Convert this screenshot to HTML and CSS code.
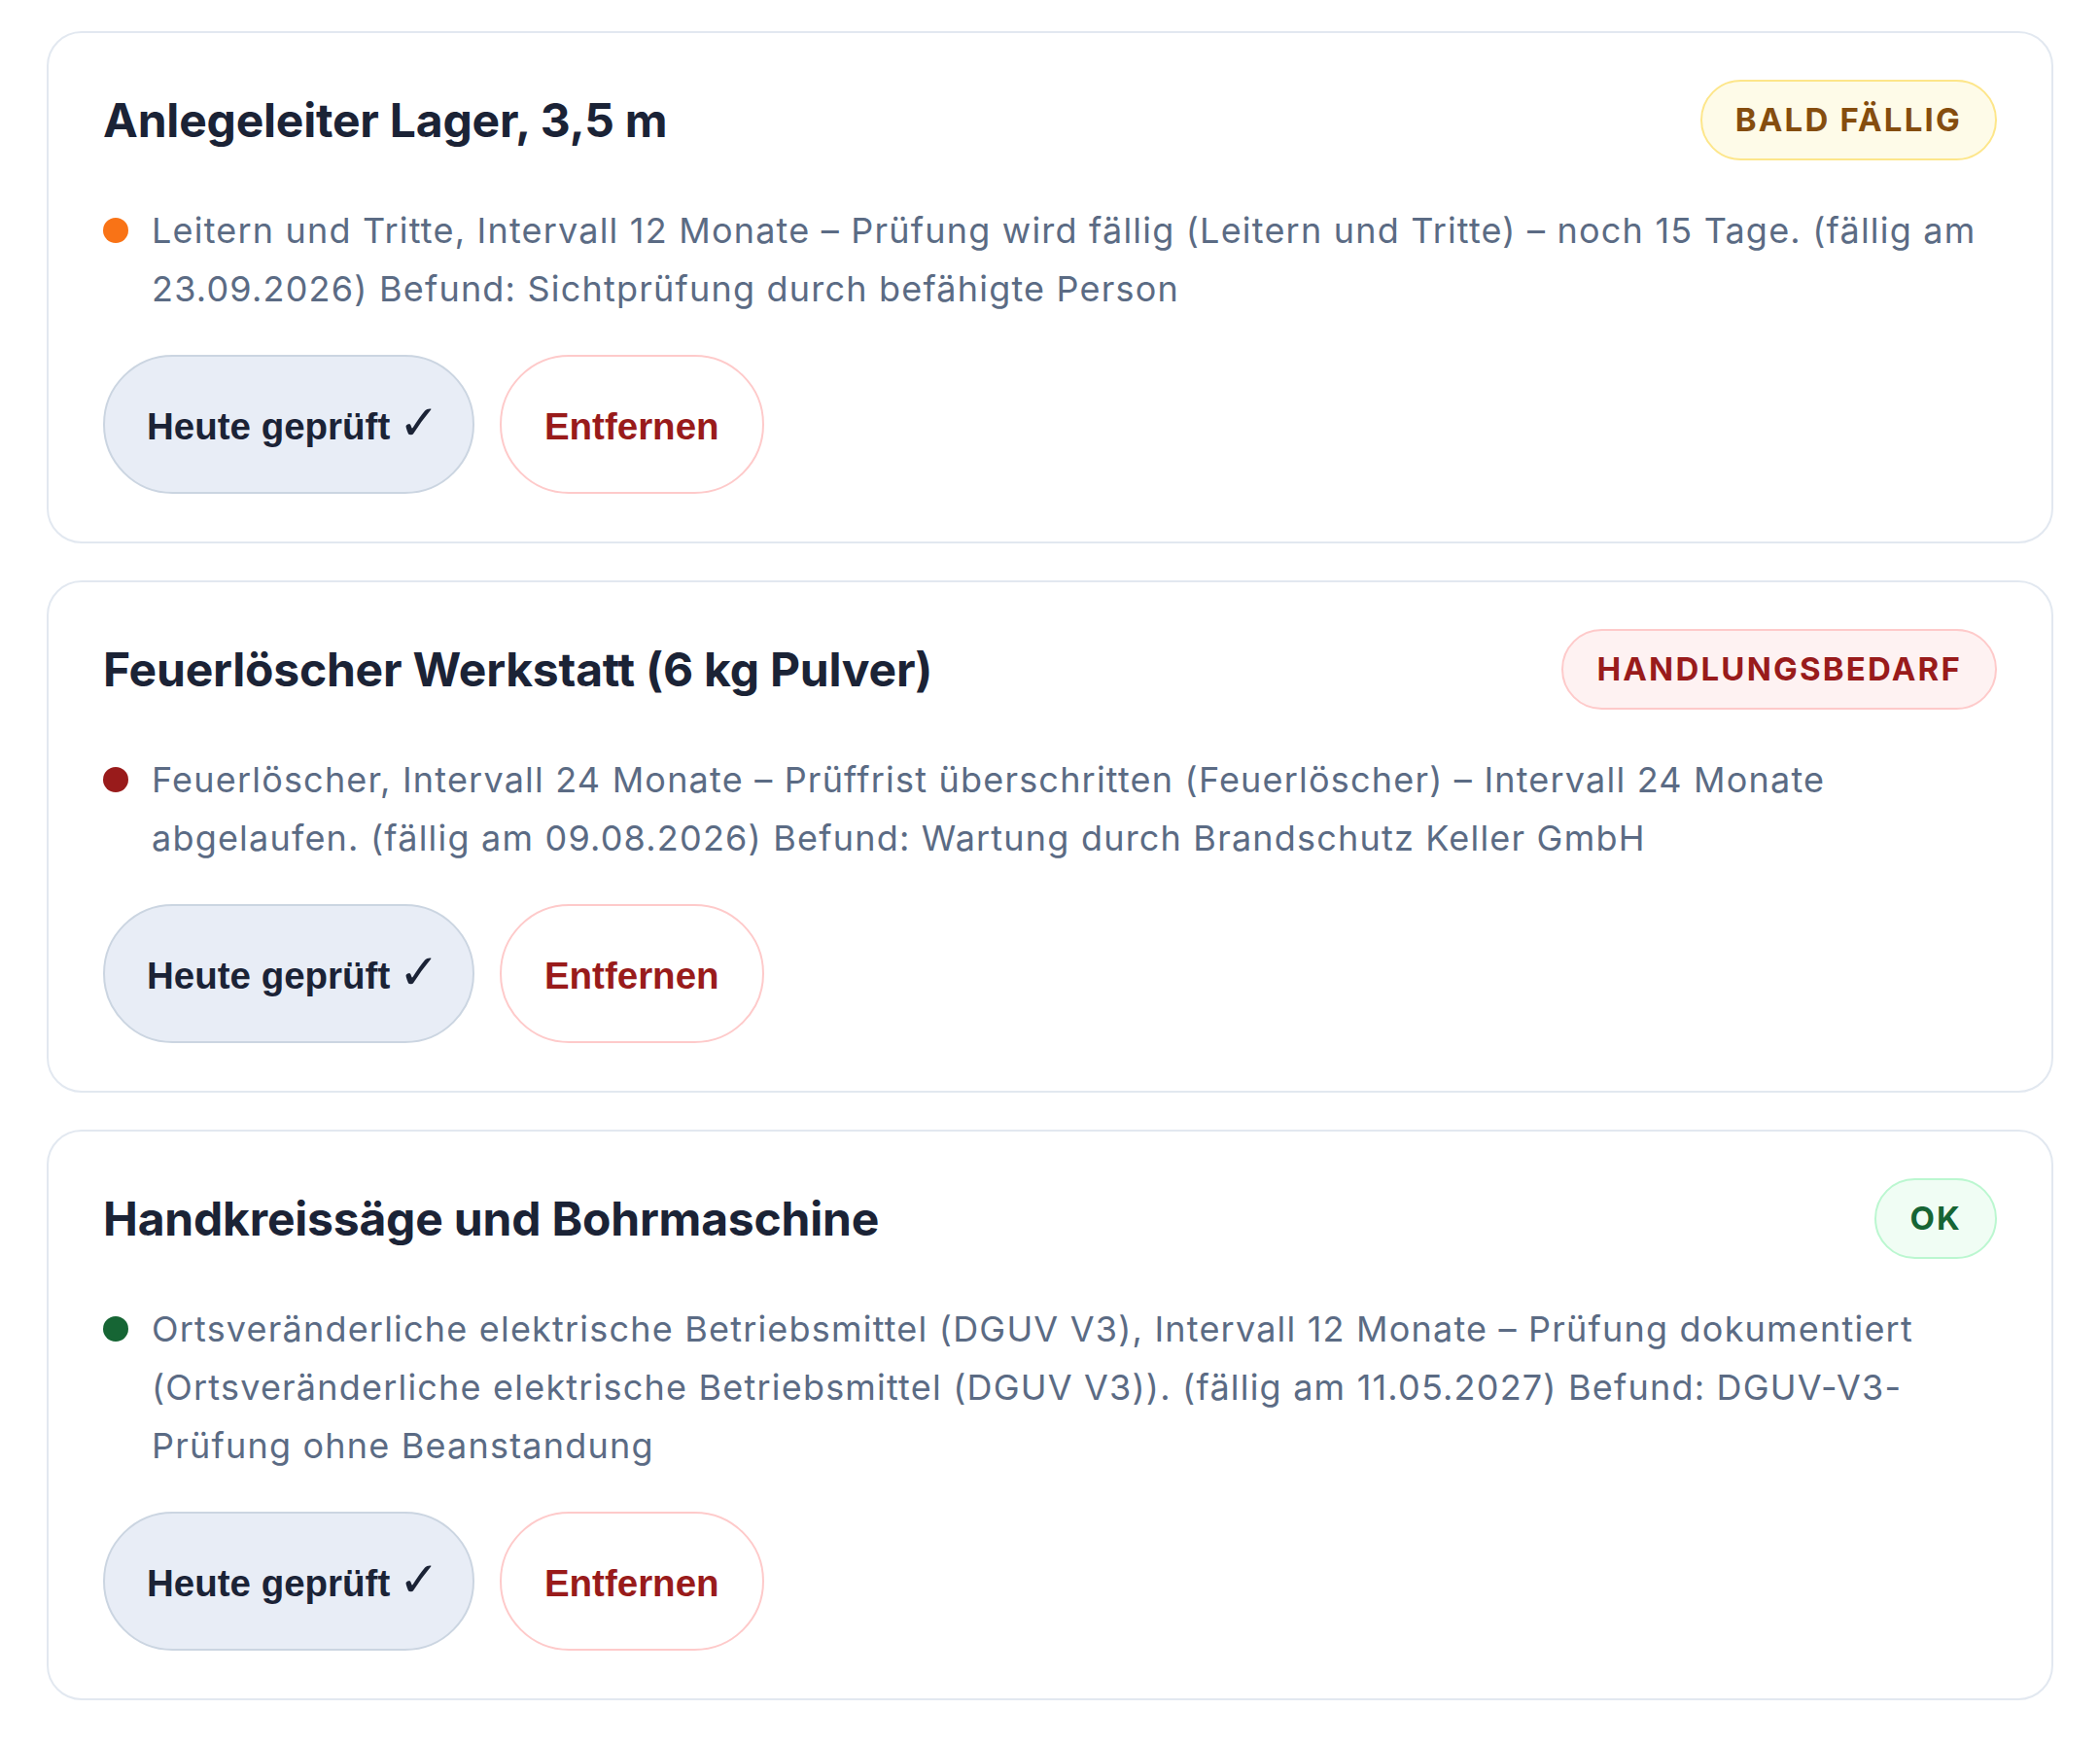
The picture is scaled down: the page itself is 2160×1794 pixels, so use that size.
FILE: index.html
```html
<!DOCTYPE html>
<html lang="de">
<head>
<meta charset="utf-8">
<title>Prüfungen</title>
<link rel="stylesheet" href="styles.css">
</head>
<body>
<main class="list">
  <article class="card">
    <div class="card-head">
      <h2 class="card-title">Anlegeleiter Lager, 3,5 m</h2>
      <span class="badge badge-soon">BALD FÄLLIG</span>
    </div>
    <div class="card-body">
      <span class="dot dot-orange"></span>
      <p class="desc">Leitern und Tritte, Intervall 12 Monate – Prüfung wird fällig (Leitern und Tritte) – noch 15 Tage. (fällig am 23.09.2026) Befund: Sichtprüfung durch befähigte Person</p>
    </div>
    <div class="actions">
      <button class="btn btn-check" type="button">Heute geprüft <span class="check">✓</span></button>
      <button class="btn btn-remove" type="button">Entfernen</button>
    </div>
  </article>

  <article class="card">
    <div class="card-head">
      <h2 class="card-title">Feuerlöscher Werkstatt (6 kg Pulver)</h2>
      <span class="badge badge-action">HANDLUNGSBEDARF</span>
    </div>
    <div class="card-body">
      <span class="dot dot-red"></span>
      <p class="desc">Feuerlöscher, Intervall 24 Monate – Prüffrist überschritten (Feuerlöscher) – Intervall 24 Monate abgelaufen. (fällig am 09.08.2026) Befund: Wartung durch Brandschutz Keller GmbH</p>
    </div>
    <div class="actions">
      <button class="btn btn-check" type="button">Heute geprüft <span class="check">✓</span></button>
      <button class="btn btn-remove" type="button">Entfernen</button>
    </div>
  </article>

  <article class="card">
    <div class="card-head">
      <h2 class="card-title">Handkreissäge und Bohrmaschine</h2>
      <span class="badge badge-ok">OK</span>
    </div>
    <div class="card-body">
      <span class="dot dot-green"></span>
      <p class="desc">Ortsveränderliche elektrische Betriebsmittel (DGUV V3), Intervall 12 Monate – Prüfung dokumentiert (Ortsveränderliche elektrische Betriebsmittel (DGUV V3)). (fällig am 11.05.2027) Befund: DGUV-V3-Prüfung ohne Beanstandung</p>
    </div>
    <div class="actions">
      <button class="btn btn-check" type="button">Heute geprüft <span class="check">✓</span></button>
      <button class="btn btn-remove" type="button">Entfernen</button>
    </div>
  </article>
</main>
</body>
</html>
```
FILE: styles.css
```css
* { box-sizing: border-box; }

body {
  margin: 0;
  padding: 32px 48px;
  background: #ffffff;
  font-family: Inter, "Noto Sans", "Liberation Sans", sans-serif;
}

.list {
  display: flex;
  flex-direction: column;
  gap: 38px;
}

.card {
  background: #ffffff;
  border: 2px solid #e2e8f0;
  border-radius: 36px;
  padding: 48px 56px 49px;
}

.card-head {
  display: flex;
  align-items: center;
  justify-content: space-between;
  gap: 24px;
}

.card-title {
  margin: 0;
  font-size: 48px;
  line-height: 1.2;
  font-weight: 700;
  letter-spacing: -0.2px;
  color: #1b2336;
}

.badge {
  flex: none;
  border: 2px solid;
  border-radius: 999px;
  padding: 19px 34px;
  font-size: 33px;
  line-height: 41px;
  font-weight: 700;
  letter-spacing: 2.2px;
}

.badge-soon {
  background: #fefbe8;
  border-color: #fde68a;
  color: #854d0e;
}

.badge-action {
  background: #fef2f2;
  border-color: #fecaca;
  color: #991b1b;
}

.badge-ok {
  background: #f0fdf4;
  border-color: #bbf7d0;
  color: #166534;
}

.card-body {
  display: flex;
  align-items: flex-start;
  gap: 24px;
  margin-top: 42px;
}

.dot {
  flex: none;
  width: 26px;
  height: 26px;
  border-radius: 50%;
  margin-top: 17px;
}

.dot-orange { background: #f97316; }
.dot-red { background: #991b1b; }
.dot-green { background: #166534; }

.desc {
  margin: 0;
  font-size: 36px;
  line-height: 60px;
  letter-spacing: 1.2px;
  color: #5b6b84;
}

.actions {
  display: flex;
  gap: 26px;
  margin-top: 38px;
}

.btn {
  font-family: "Liberation Sans", Arial, "DejaVu Sans", sans-serif;
  font-weight: 700;
  font-size: 38.5px;
  line-height: 43px;
  padding: 50px 44px 46px;
  border: 2px solid;
  border-radius: 999px;
  white-space: nowrap;
  cursor: pointer;
}

.check {
  font-family: "DejaVu Sans", sans-serif;
  font-weight: 700;
  font-size: 1.3em;
  line-height: 0;
  margin-left: -2px;
  margin-right: -11px;
}

.btn-check {
  background: #e8edf6;
  border-color: #cbd5e1;
  color: #1b2336;
  padding-left: 43px;
  padding-right: 45px;
}

.btn-remove {
  background: #ffffff;
  border-color: #fecaca;
  color: #991b1b;
}
```
